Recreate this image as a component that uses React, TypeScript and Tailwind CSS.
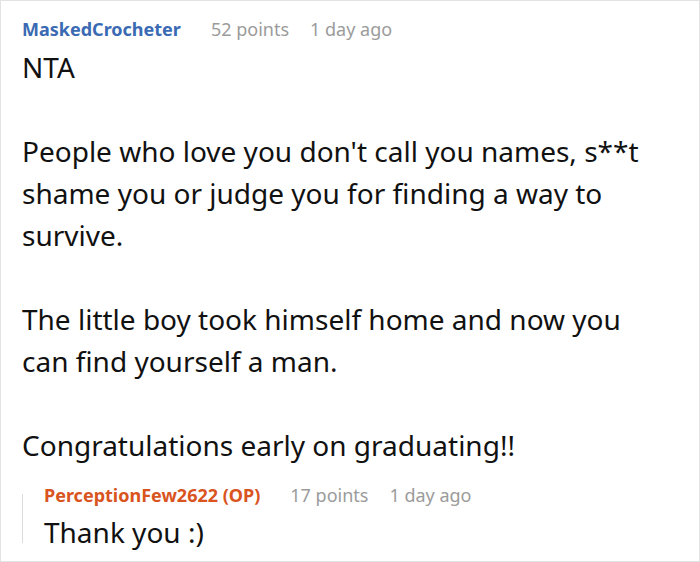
export default function App() {
  return (
    <div className="w-[700px] h-[562px] bg-white border border-[#e3e3e3] overflow-hidden" style={{ fontFamily: '"Noto Sans", sans-serif' }}>
      <div className="pl-[21px] pt-[12px] pr-[36px]">
        <div className="flex items-baseline text-[18px] leading-[33px]">
          <span className="font-bold text-[#3a6ab3]">MaskedCrocheter</span>
          <span className="ml-[30px] text-[#9b9b9b]">52 points</span>
          <span className="ml-[21px] text-[#9b9b9b]">1 day ago</span>
        </div>
        <div className="text-[28px] leading-[42px] text-[#111]">
          <p>NTA</p>
          <p>&nbsp;</p>
          <p>People who love you don't call you names, s**t shame you or judge you for finding a way to survive.</p>
          <p>&nbsp;</p>
          <p>The little boy took himself home and now you can find yourself a man.</p>
          <p>&nbsp;</p>
          <p>Congratulations early on graduating!!</p>
        </div>
        <div className="mt-[13px] flex">
          <div className="w-px bg-[#dcdcdc] mt-[15px] mb-[10px]" />
          <div className="pl-[21px]">
            <div className="flex items-baseline text-[18px] leading-[32px]">
              <span className="font-bold text-[#d9541e]">PerceptionFew2622 (OP)</span>
              <span className="ml-[30px] text-[#9b9b9b]">17 points</span>
              <span className="ml-[21px] text-[#9b9b9b]">1 day ago</span>
            </div>
            <p className="text-[28px] leading-[42px] text-[#111]">Thank you :)</p>
          </div>
        </div>
      </div>
    </div>
  );
}
